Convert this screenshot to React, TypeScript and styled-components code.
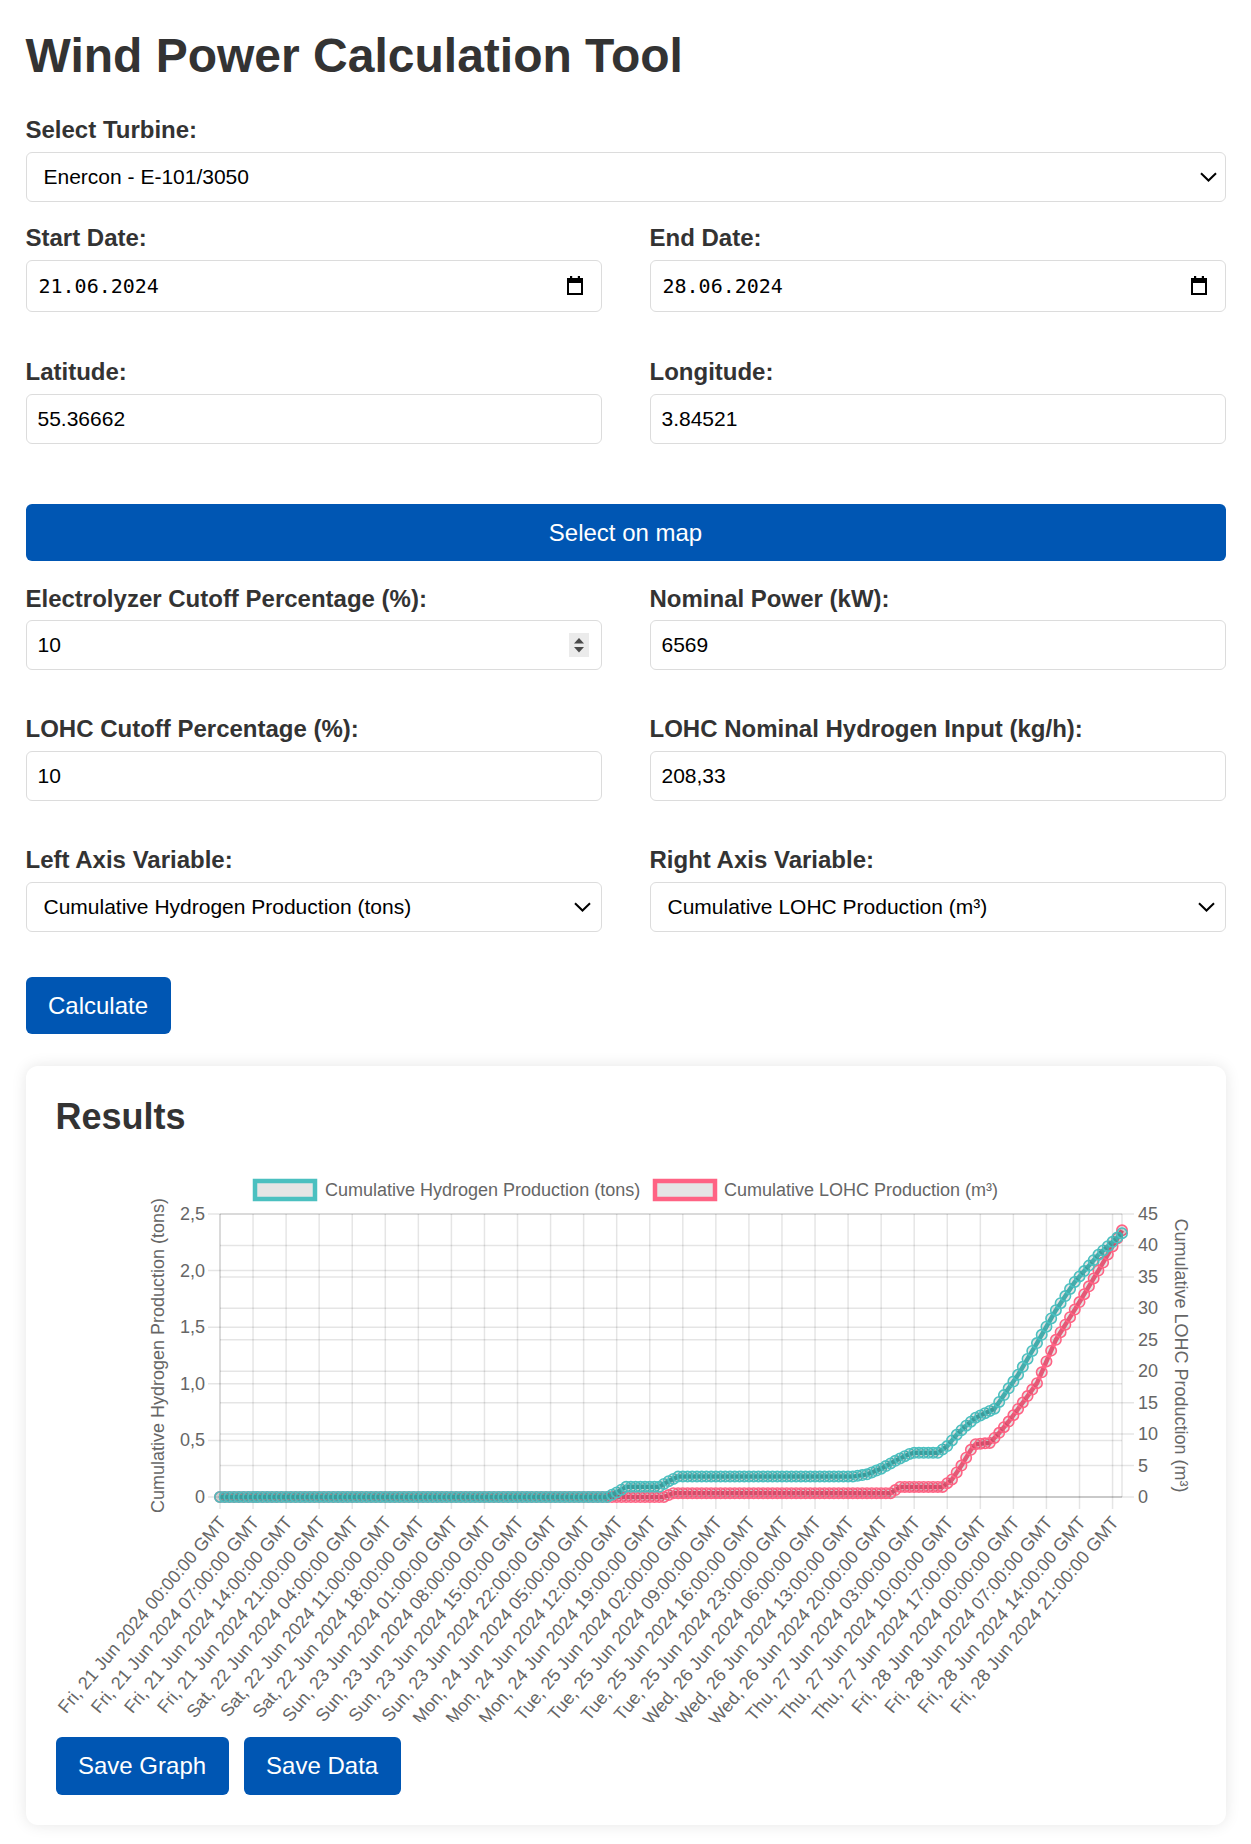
import React from 'react';
import styled, { createGlobalStyle } from 'styled-components';

const GlobalStyle = createGlobalStyle`
  html, body { margin: 0; padding: 0; background: #fff; }
  body { font-family: "Liberation Sans", Arial, Helvetica, sans-serif; color: #333; }
  * { box-sizing: border-box; }
`;

const Container = styled.div`
  width: 1200px;
  margin: 0 auto;
  padding-bottom: 16px;
`;

const Title = styled.h1`
  margin: 28px 0 33px;
  font-size: 48px;
  line-height: 55px;
  font-weight: 700;
  color: #333;
`;

const Group = styled.div<{ $mb?: number }>`
  margin-bottom: ${(p) => p.$mb ?? 0}px;
`;

const Row = styled.div<{ $mb?: number }>`
  display: grid;
  grid-template-columns: 1fr 1fr;
  column-gap: 48px;
  margin-bottom: ${(p) => p.$mb ?? 45}px;
`;

const Label = styled.label`
  display: block;
  font-size: 24px;
  line-height: 27.6px;
  font-weight: 700;
  color: #333;
  margin-bottom: 8px;
`;

const Field = styled.div<{ $h?: number; $pr?: number }>`
  display: flex;
  align-items: center;
  height: ${(p) => p.$h ?? 50}px;
  border: 1.5px solid #dcdcdc;
  border-radius: 6px;
  padding-right: ${(p) => p.$pr ?? 12}px;
  background: #fff;
`;

const IconSlot = styled.span`
  display: flex;
  flex-shrink: 0;
  align-items: center;
  justify-content: center;
`;

const TextInput = styled.input<{ $mono?: boolean }>`
  flex: 1;
  min-width: 0;
  height: 100%;
  border: none;
  outline: none;
  background: transparent;
  padding: 0 0 0 ${(p) => (p.$mono ? 12 : 11)}px;
  font-family: ${(p) =>
    p.$mono ? '"DejaVu Sans Mono", "Liberation Mono", monospace' : '"Liberation Sans", Arial, sans-serif'};
  font-size: ${(p) => (p.$mono ? 20 : 21)}px;
  color: #000;
`;

const SelectInput = styled.select`
  flex: 1;
  min-width: 0;
  height: 100%;
  appearance: none;
  -webkit-appearance: none;
  border: none;
  outline: none;
  background: transparent;
  padding: 0 0 0 17px;
  font-family: "Liberation Sans", Arial, sans-serif;
  font-size: 21px;
  color: #000;
`;

const Button = styled.button<{ $block?: boolean }>`
  display: block;
  width: ${(p) => (p.$block ? '100%' : 'fit-content')};
  background: #0056b3;
  color: #fff;
  border: none;
  border-radius: 6px;
  font-family: "Liberation Sans", Arial, sans-serif;
  font-size: 24px;
  line-height: 27.6px;
  padding: 15px 22.5px;
  cursor: pointer;
`;

const MapButtonWrap = styled.div`
  margin-bottom: 23.5px;
`;

const Card = styled.section`
  margin-top: 31.5px;
  background: #fff;
  border-radius: 12px;
  box-shadow: 0 0 15px rgba(0, 0, 0, 0.1);
  padding: 30px;
`;

const CardTitle = styled.h2`
  margin: 0 0 28px;
  font-size: 36px;
  line-height: 41.4px;
  font-weight: 700;
  color: #333;
`;

const ChartSvg = styled.svg`
  display: block;
`;

const ChartText = styled.text`
  font-family: "Liberation Sans", Arial, Helvetica, sans-serif;
  font-size: 18px;
  fill: #666;
`;

const ButtonRow = styled.div`
  display: flex;
  gap: 15px;
  margin-top: 15px;
`;

/* ---------- icons ---------- */

const Chevron = () => (
  <IconSlot>
    <svg width="17" height="10" viewBox="0 0 17 10">
      <polyline points="1,1.2 8.5,8.5 16,1.2" fill="none" stroke="#000" strokeWidth="2" />
    </svg>
  </IconSlot>
);

const CalendarIcon = () => (
  <IconSlot>
    <svg width="16" height="19" viewBox="0 0 16 19">
      <rect x="3" y="0" width="2.2" height="4" fill="#000" />
      <rect x="10.8" y="0" width="2.2" height="4" fill="#000" />
      <rect x="1" y="3" width="14" height="15" fill="none" stroke="#000" strokeWidth="2" />
      <rect x="1" y="3" width="14" height="4" fill="#000" />
    </svg>
  </IconSlot>
);

const Spinner = () => (
  <IconSlot>
    <svg width="20" height="24" viewBox="0 0 20 24">
      <rect x="0" y="0" width="20" height="24" fill="#ebebeb" />
      <polygon points="10,5 15,10.5 5,10.5" fill="#4a4a4a" />
      <polygon points="5,14 15,14 10,19.5" fill="#4a4a4a" />
    </svg>
  </IconSlot>
);

/* ---------- chart ---------- */

const W = 1140;
const H = 557;
const PL = 164;
const PR = 1066;
const PT = 49;
const PB = 332;
const N = 192;
const TEAL = 'rgb(75, 192, 192)';
const PINK = 'rgb(255, 99, 132)';
const GRID = 'rgba(0,0,0,0.1)';

const xAt = (i: number) => PL + (i * (PR - PL)) / (N - 1);
const yL = (v: number) => PB - (v / 2.5) * (PB - PT);
const yR = (v: number) => PB - (v / 45) * (PB - PT);

type Key = [number, number];

const interp = (keys: Key[], i: number) => {
  for (let k = 0; k < keys.length - 1; k++) {
    const [i0, v0] = keys[k];
    const [i1, v1] = keys[k + 1];
    if (i >= i0 && i <= i1) {
      if (i1 === i0) return v1;
      return v0 + ((v1 - v0) * (i - i0)) / (i1 - i0);
    }
  }
  return keys[keys.length - 1][1];
};

const h2Keys: Key[] = [
  [0, 0], [82, 0], [84, 0.04], [86, 0.09], [93, 0.09], [95, 0.14], [97, 0.18],
  [134, 0.18], [137, 0.2], [140, 0.25], [143, 0.32], [146, 0.38], [147, 0.39],
  [152, 0.39], [154, 0.45], [156, 0.55], [158, 0.63], [160, 0.7], [162, 0.74],
  [164, 0.78], [165, 0.84], [167, 0.96], [169, 1.08], [173, 1.36], [177, 1.65],
  [181, 1.9], [186, 2.14], [191, 2.33],
];

const lohcKeys: Key[] = [
  [0, 0], [94, 0], [95, 0.3], [96, 0.6], [142, 0.6], [143, 1.1], [144, 1.6],
  [153, 1.6], [155, 2.8], [157, 5], [159, 7.5], [160, 8.4], [163, 8.6],
  [165, 10.2], [167, 12], [169, 14], [173, 18.1], [177, 25], [182, 31],
  [186, 36], [191, 42.4],
];

const h2Data = Array.from({ length: N }, (_, i) => interp(h2Keys, i));
const lohcData = Array.from({ length: N }, (_, i) => interp(lohcKeys, i));

const tickIdx = Array.from({ length: 28 }, (_, k) => k * 7);
const tickLabel = (idx: number) =>
  new Date(Date.UTC(2024, 5, 21) + idx * 3600000).toUTCString();

const leftTicks = [0, 0.5, 1, 1.5, 2, 2.5];
const rightTicks = [0, 5, 10, 15, 20, 25, 30, 35, 40, 45];
const fmtLeft = (v: number) => (v === 0 ? '0' : v.toFixed(1).replace('.', ','));

const Series = ({ data, y, color }: { data: number[]; y: (v: number) => number; color: string }) => {
  const pts = data.map((v, i) => `${xAt(i).toFixed(2)},${y(v).toFixed(2)}`).join(' ');
  return (
    <g>
      <polyline points={pts} fill="none" stroke={color} strokeWidth={4.5} strokeLinejoin="round" />
      {data.map((v, i) => (
        <circle
          key={i}
          cx={xAt(i)}
          cy={y(v)}
          r={5.2}
          fill="rgba(0,0,0,0.1)"
          stroke={color}
          strokeWidth={1.6}
        />
      ))}
    </g>
  );
};

const Chart = () => (
  <ChartSvg width={W} height={H} viewBox={`0 0 ${W} ${H}`}>
    {/* legend */}
    <rect x={199} y={16} width={60} height={18} fill="rgba(0,0,0,0.1)" stroke={TEAL} strokeWidth={4.5} />
    <ChartText x={269} y={25} dominantBaseline="central">
      Cumulative Hydrogen Production (tons)
    </ChartText>
    <rect x={599} y={16} width={60} height={18} fill="rgba(0,0,0,0.1)" stroke={PINK} strokeWidth={4.5} />
    <ChartText x={668} y={25} dominantBaseline="central">
      Cumulative LOHC Production (m³)
    </ChartText>

    {/* vertical grid */}
    {tickIdx.map((idx) => (
      <line key={`v${idx}`} x1={xAt(idx)} x2={xAt(idx)} y1={PT} y2={PB + 12} stroke={GRID} strokeWidth={1.5} />
    ))}
    <line x1={PR} x2={PR} y1={PT} y2={PB} stroke={GRID} strokeWidth={1.5} />
    <line x1={PL} x2={PL} y1={PT} y2={PB} stroke={GRID} strokeWidth={1.5} />

    {/* horizontal grid */}
    {leftTicks.map((v) => (
      <line key={`l${v}`} x1={PL - 12} x2={PR} y1={yL(v)} y2={yL(v)} stroke={GRID} strokeWidth={1.5} />
    ))}
    {rightTicks.map((v) => (
      <line key={`r${v}`} x1={PL} x2={PR + 12} y1={yR(v)} y2={yR(v)} stroke={GRID} strokeWidth={1.5} />
    ))}
    <line x1={PL} x2={PR} y1={PB} y2={PB} stroke={GRID} strokeWidth={1.5} />

    {/* tick labels */}
    {leftTicks.map((v) => (
      <ChartText key={`lt${v}`} x={149} y={yL(v)} textAnchor="end" dominantBaseline="central">
        {fmtLeft(v)}
      </ChartText>
    ))}
    {rightTicks.map((v) => (
      <ChartText key={`rt${v}`} x={1082} y={yR(v)} dominantBaseline="central">
        {v}
      </ChartText>
    ))}
    {tickIdx.map((idx) => {
      const x = xAt(idx) + 2.5;
      const y = 354;
      return (
        <ChartText
          key={`xt${idx}`}
          x={x}
          y={y}
          textAnchor="end"
          dominantBaseline="central"
          transform={`rotate(-50 ${x} ${y})`}
        >
          {tickLabel(idx)}
        </ChartText>
      );
    })}

    {/* axis titles */}
    <ChartText x={108} y={(PT + PB) / 2} textAnchor="middle" transform={`rotate(-90 108 ${(PT + PB) / 2})`}>
      Cumulative Hydrogen Production (tons)
    </ChartText>
    <ChartText x={1119} y={(PT + PB) / 2} textAnchor="middle" transform={`rotate(90 1119 ${(PT + PB) / 2})`}>
      Cumulative LOHC Production (m³)
    </ChartText>

    {/* datasets: later ones drawn first */}
    <Series data={lohcData} y={yR} color={PINK} />
    <Series data={h2Data} y={yL} color={TEAL} />
  </ChartSvg>
);

/* ---------- app ---------- */

export default function App() {
  return (
    <>
      <GlobalStyle />
      <Container>
        <Title>Wind Power Calculation Tool</Title>

        <Group $mb={22.5}>
          <Label>Select Turbine:</Label>
          <Field $pr={8}>
            <SelectInput defaultValue="e101">
              <option value="e101">Enercon - E-101/3050</option>
            </SelectInput>
            <Chevron />
          </Field>
        </Group>

        <Row $mb={46.5}>
          <Group>
            <Label>Start Date:</Label>
            <Field $h={52} $pr={18}>
              <TextInput $mono readOnly value="21.06.2024" />
              <CalendarIcon />
            </Field>
          </Group>
          <Group>
            <Label>End Date:</Label>
            <Field $h={52} $pr={18}>
              <TextInput $mono readOnly value="28.06.2024" />
              <CalendarIcon />
            </Field>
          </Group>
        </Row>

        <Row $mb={60}>
          <Group>
            <Label>Latitude:</Label>
            <Field>
              <TextInput readOnly value="55.36662" />
            </Field>
          </Group>
          <Group>
            <Label>Longitude:</Label>
            <Field>
              <TextInput readOnly value="3.84521" />
            </Field>
          </Group>
        </Row>

        <MapButtonWrap>
          <Button $block>Select on map</Button>
        </MapButtonWrap>

        <Row>
          <Group>
            <Label>Electrolyzer Cutoff Percentage (%):</Label>
            <Field $pr={12}>
              <TextInput readOnly value="10" />
              <Spinner />
            </Field>
          </Group>
          <Group>
            <Label>Nominal Power (kW):</Label>
            <Field>
              <TextInput readOnly value="6569" />
            </Field>
          </Group>
        </Row>

        <Row>
          <Group>
            <Label>LOHC Cutoff Percentage (%):</Label>
            <Field>
              <TextInput readOnly value="10" />
            </Field>
          </Group>
          <Group>
            <Label>LOHC Nominal Hydrogen Input (kg/h):</Label>
            <Field>
              <TextInput readOnly value="208,33" />
            </Field>
          </Group>
        </Row>

        <Row>
          <Group>
            <Label>Left Axis Variable:</Label>
            <Field $pr={10}>
              <SelectInput defaultValue="h2">
                <option value="h2">Cumulative Hydrogen Production (tons)</option>
              </SelectInput>
              <Chevron />
            </Field>
          </Group>
          <Group>
            <Label>Right Axis Variable:</Label>
            <Field $pr={10}>
              <SelectInput defaultValue="lohc">
                <option value="lohc">Cumulative LOHC Production (m³)</option>
              </SelectInput>
              <Chevron />
            </Field>
          </Group>
        </Row>

        <Button>Calculate</Button>

        <Card>
          <CardTitle>Results</CardTitle>
          <Chart />
          <ButtonRow>
            <Button>Save Graph</Button>
            <Button>Save Data</Button>
          </ButtonRow>
        </Card>
      </Container>
    </>
  );
}
